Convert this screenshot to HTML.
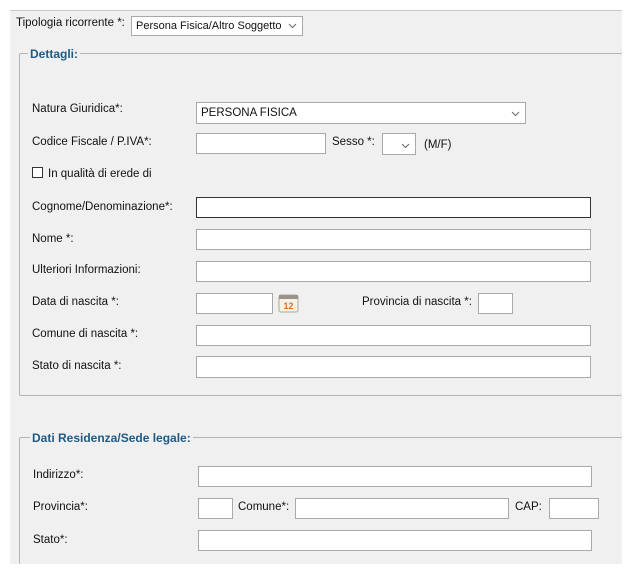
<!DOCTYPE html>
<html style="overflow:hidden;height:574px"><head><meta charset="utf-8"><style>
body{margin:0;width:626px;height:574px;background:#fff;position:relative;overflow:hidden;font-family:"Liberation Sans",Arial,sans-serif;font-size:11.5px;color:#111}
.bg{position:absolute;left:10px;top:10px;width:612px;height:553px;background:#f0f0f0;border-top:1px solid #c8c8c8;overflow:hidden}
.a{position:absolute}
.l{position:absolute;line-height:14px;white-space:nowrap;margin-top:1px}
.i{position:absolute;background:#fff;border:1px solid #a9a9a9;box-sizing:border-box}
.fs{position:absolute;border:1px solid #b4b4b4;border-radius:2px;box-sizing:border-box}
.lg{position:absolute;background:#f0f0f0;color:#1f5a85;font-weight:bold;font-size:12px;padding:0 2px;line-height:14px;white-space:nowrap}
.sel{position:absolute;background:#fff;border:1px solid #a9a9a9;box-sizing:border-box;line-height:18px;padding-left:4px;font-size:11.5px;white-space:nowrap;overflow:hidden}
.chev{position:absolute;right:5px;top:0}
</style></head><body>
<div class="bg">
<div class="fs" style="left:9px;top:42px;width:603px;height:343px;border-right:none"></div>
<div class="lg" style="left:18px;top:36px">Dettagli:</div>
<div class="fs" style="left:9px;top:426px;width:603px;height:127px;border-right:none;border-bottom:none"></div>
<div class="lg" style="left:20px;top:420px">Dati Residenza/Sede legale:</div>
</div>
<div class="l" style="left:16px;top:15px">Tipologia ricorrente *:</div>
<div class="sel" style="left:131px;top:16px;width:172px;height:20px;font-size:11px">Persona Fisica/Altro Soggetto<svg class="chev" style="top:6px;background:#fff" width="9" height="6"><path d="M1 1L4.5 4.5L8 1" stroke="#666" fill="none"/></svg></div>

<div class="l" style="left:32px;top:101px">Natura Giuridica*:</div>
<div class="sel" style="left:196px;top:102px;width:330px;height:22px;line-height:21px">PERSONA FISICA<svg class="chev" style="top:8px" width="9" height="6"><path d="M1 1L4.5 4.5L8 1" stroke="#666" fill="none"/></svg></div>

<div class="l" style="left:32px;top:134px">Codice Fiscale / P.IVA*:</div>
<div class="i" style="left:196px;top:133px;width:130px;height:21px"></div>
<div class="l" style="left:332px;top:134px">Sesso *:</div>
<div class="sel" style="left:382px;top:133px;width:34px;height:22px"><svg class="chev" style="top:9px" width="9" height="6"><path d="M1 1L4.5 4.5L8 1" stroke="#666" fill="none"/></svg></div>
<div class="l" style="left:424px;top:137px">(M/F)</div>

<div class="a" style="left:32px;top:167px;width:11px;height:11px;border:1px solid #333;background:#fff;box-sizing:border-box"></div>
<div class="l" style="left:48px;top:166px">In qualità di erede di</div>

<div class="l" style="left:32px;top:199px">Cognome/Denominazione*:</div>
<div class="i" style="left:196px;top:197px;width:395px;height:21px;border-color:#333"></div>
<div class="l" style="left:32px;top:231px">Nome *:</div>
<div class="i" style="left:196px;top:229px;width:395px;height:21px"></div>
<div class="l" style="left:32px;top:262px">Ulteriori Informazioni:</div>
<div class="i" style="left:196px;top:261px;width:395px;height:21px"></div>
<div class="l" style="left:32px;top:294px">Data di nascita *:</div>
<div class="i" style="left:196px;top:293px;width:77px;height:21px"></div>
<svg class="a" style="left:278px;top:293px" width="21" height="20"><rect x="1" y="2" width="19" height="17" rx="2" fill="#f4f1ea" stroke="#b0a890"/><rect x="1" y="2" width="19" height="4" fill="#9a9488"/><text x="10.5" y="16" text-anchor="middle" font-size="9" font-weight="bold" fill="#e07020" font-family="Liberation Sans">12</text></svg>
<div class="l" style="left:362px;top:294px">Provincia di nascita *:</div>
<div class="i" style="left:478px;top:293px;width:35px;height:21px"></div>
<div class="l" style="left:32px;top:326px">Comune di nascita *:</div>
<div class="i" style="left:196px;top:325px;width:395px;height:21px"></div>
<div class="l" style="left:32px;top:358px">Stato di nascita *:</div>
<div class="i" style="left:196px;top:356px;width:395px;height:22px"></div>

<div class="l" style="left:33px;top:467px">Indirizzo*:</div>
<div class="i" style="left:198px;top:466px;width:394px;height:21px"></div>
<div class="l" style="left:33px;top:499px">Provincia*:</div>
<div class="i" style="left:198px;top:498px;width:35px;height:21px"></div>
<div class="l" style="left:238px;top:499px">Comune*:</div>
<div class="i" style="left:295px;top:498px;width:214px;height:21px"></div>
<div class="l" style="left:515px;top:499px">CAP:</div>
<div class="i" style="left:549px;top:498px;width:50px;height:21px"></div>
<div class="l" style="left:33px;top:532px">Stato*:</div>
<div class="i" style="left:198px;top:530px;width:394px;height:21px"></div>
</body></html>
